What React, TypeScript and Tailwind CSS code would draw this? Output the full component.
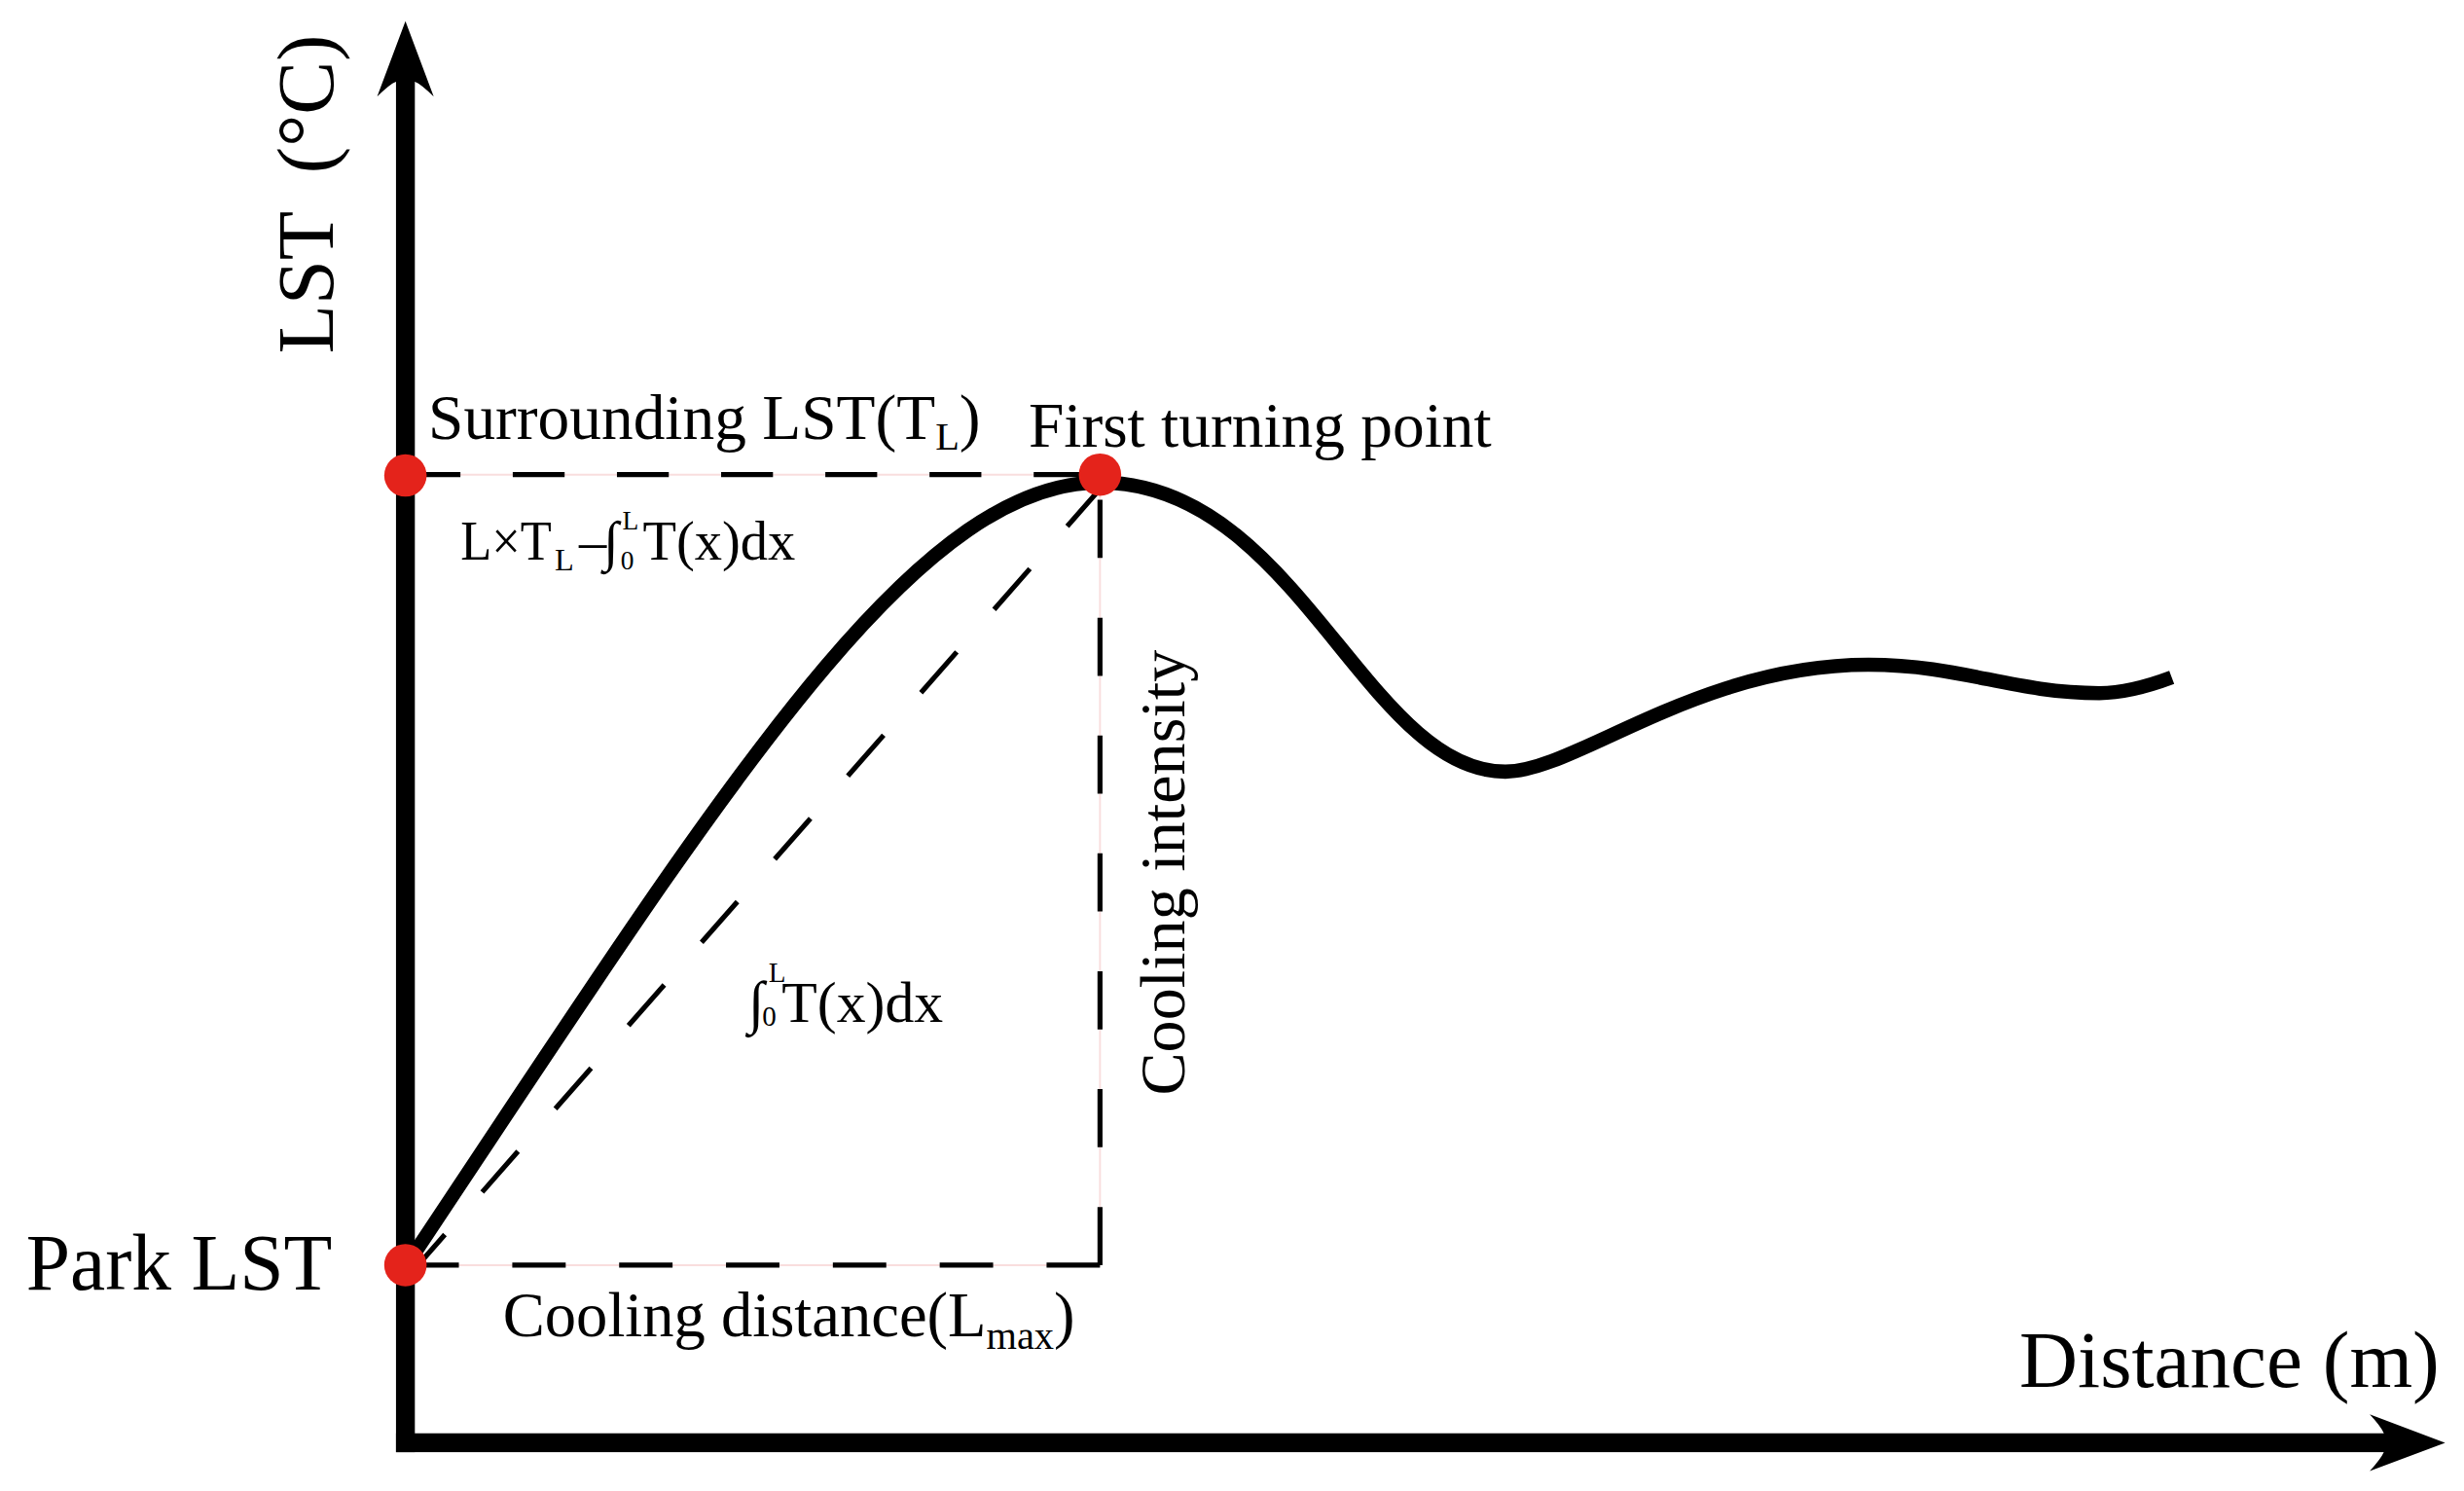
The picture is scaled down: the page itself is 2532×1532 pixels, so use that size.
const RED = "#e4231b";

// LST curve as hand-fitted cubic segments (figure units, 1568 wide)
const CURVE =
  "M258 806 C458 506 580 307 700 307" +
  " C825 307 869 491 958 491" +
  " C1002 491 1080 423 1189 423" +
  " C1249 423 1280 441 1336 441" +
  " C1352 441 1370 435.5 1382 431";

const CoolingChart = () => {
  return (
    <svg
      viewBox="0 0 1568 948.7"
      className="block w-full h-full font-['Liberation_Serif','Times_New_Roman',serif]"
    >
      {/* faint guide lines under the dashes */}
      <g stroke="#f9dede" strokeWidth={1.2} fill="none">
        <line x1={258} y1={302} x2={700} y2={302} />
        <line x1={700} y1={302} x2={700} y2={805} />
        <line x1={258} y1={805} x2={700} y2={805} />
      </g>

      {/* dashed box + diagonal */}
      <g stroke="#000" strokeWidth={3.2} fill="none">
        <path d="M260 302 L700 302" strokeDasharray="33 33.3" />
        <path d="M700 805 L700 302" strokeDasharray="37 38" />
        <path d="M700 805 L258 805" strokeDasharray="34 34" />
        <path d="M266 805 L708 302" strokeDasharray="34.5 36" strokeDashoffset={8.6} />
      </g>

      <path d={CURVE} stroke="#000" strokeWidth={9} fill="none" />

      {/* axes */}
      <rect x={252} y={50} width={12} height={874} fill="#000" />
      <path d="M258 13.5 L276 61.5 Q268 53.5 264 52 L252 52 Q248 53.5 240 61.5 Z" fill="#000" />
      <rect x={252} y={912} width={1266} height={12} fill="#000" />
      <path d="M1556 918 L1508 900 Q1515 907.5 1517 912 L1517 924 Q1515 928.5 1508 936 Z" fill="#000" />

      {/* key points */}
      <circle cx={258} cy={302.5} r={13.5} fill={RED} />
      <circle cx={700} cy={302} r={13.5} fill={RED} />
      <circle cx={258} cy={805} r={13.5} fill={RED} />

      <g fill="#000">
        <text transform="translate(211.5 225) rotate(-90)" fontSize={51}>
          LST<tspan dx={24}>(°C)</tspan>
        </text>

        <text x={272.5} y={279} fontSize={40.5}>
          Surrounding LST(T
          <tspan fontSize={25} dy={7}>L</tspan>
          <tspan dy={-7}>)</tspan>
        </text>

        <text x={654.5} y={284} fontSize={40.5}>
          First turning point
        </text>

        <text fontSize={35}>
          <tspan x={293} y={356} textLength={58} lengthAdjust="spacingAndGlyphs">
            L×T
          </tspan>
          <tspan x={353} y={363} fontSize={20}>L</tspan>
          <tspan x={368.5} y={356}>–</tspan>
          <tspan x={384} y={356}>∫</tspan>
          <tspan x={396} y={337} fontSize={17}>L</tspan>
          <tspan x={395} y={362} fontSize={17}>0</tspan>
          <tspan x={409} y={356}>T(x)dx</tspan>
        </text>

        <text fontSize={37}>
          <tspan x={476} y={650}>∫</tspan>
          <tspan x={489} y={625} fontSize={18}>L</tspan>
          <tspan x={485} y={653} fontSize={18}>0</tspan>
          <tspan x={497.5} y={650}>T(x)dx</tspan>
        </text>

        <text transform="translate(753.5 697) rotate(-90)" fontSize={41}>
          Cooling intensity
        </text>

        <text x={16.5} y={820.5} fontSize={50.5}>
          Park LST
        </text>

        <text x={320} y={850.5} fontSize={40}>
          Cooling distance(L
          <tspan fontSize={25} dy={8}>max</tspan>
          <tspan dy={-8}>)</tspan>
        </text>

        <text x={1285} y={882.5} fontSize={51.5}>
          Distance (m)
        </text>
      </g>
    </svg>
  );
};

export default function App() {
  return (
    <div className="w-[2532px] h-[1532px] bg-white">
      <CoolingChart />
    </div>
  );
}
